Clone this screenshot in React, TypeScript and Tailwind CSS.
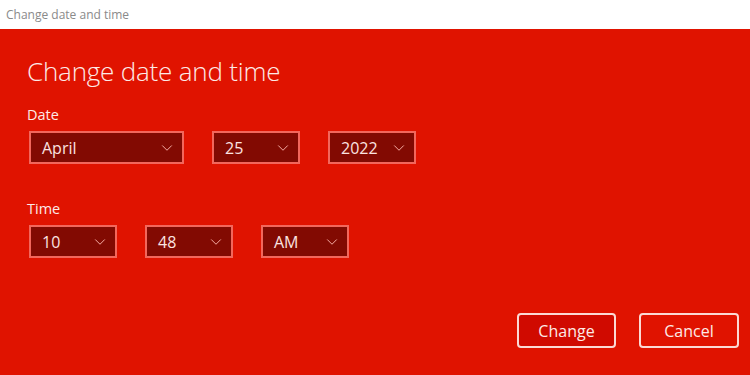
import { ChevronDown } from 'lucide-react';

interface SelectBoxProps {
  value: string;
  width: string;
}

function SelectBox({ value, width }: SelectBoxProps) {
  return (
    <div
      className={`${width} h-[33px] flex items-center justify-between pl-[11px] pr-[6px] bg-[#820a02] border-2 border-[#f2675c] text-[#fbe3e0] text-[16px]`}
    >
      <span className="leading-none">{value}</span>
      <ChevronDown className="w-[18px] h-[18px] text-[#f7b0a8]" strokeWidth={1.3} />
    </div>
  );
}

export default function App() {
  return (
    <div
      className="w-[750px] h-[375px] flex flex-col bg-white overflow-hidden"
      style={{ fontFamily: '"Open Sans", "Noto Sans", "Liberation Sans", sans-serif' }}
    >
      <div className="h-[29px] flex items-center px-[6px] text-[12px] text-[#8a8a8a]">
        Change date and time
      </div>

      <div className="flex-1 flex flex-col bg-[#e01300] pl-[27px] pr-[11px] pt-[25px] text-[#fdeae7]">
        <h1 className="text-[26px] font-light leading-[34px] tracking-[-0.2px]">
          Change date and time
        </h1>

        <div className="mt-[17px] text-[14.5px] leading-[20px]">Date</div>
        <div className="mt-[6px] ml-[2px] flex gap-[28px]">
          <SelectBox value="April" width="w-[155px]" />
          <SelectBox value="25" width="w-[88px]" />
          <SelectBox value="2022" width="w-[88px]" />
        </div>

        <div className="mt-[35px] text-[14.5px] leading-[20px]">Time</div>
        <div className="mt-[6px] ml-[2px] flex gap-[28px]">
          <SelectBox value="10" width="w-[88px]" />
          <SelectBox value="48" width="w-[88px]" />
          <SelectBox value="AM" width="w-[88px]" />
        </div>

        <div className="mt-[55px] flex justify-end gap-[23px]">
          <button className="w-[99px] h-[35px] rounded-[4px] border-2 border-[#fbd9d4] bg-[#d00a00] text-[16px] text-[#fdeae7]">
            Change
          </button>
          <button className="w-[100px] h-[35px] rounded-[4px] border-2 border-[#fbd9d4] bg-[#e01300] text-[16px] text-[#fdeae7]">
            Cancel
          </button>
        </div>
      </div>
    </div>
  );
}
